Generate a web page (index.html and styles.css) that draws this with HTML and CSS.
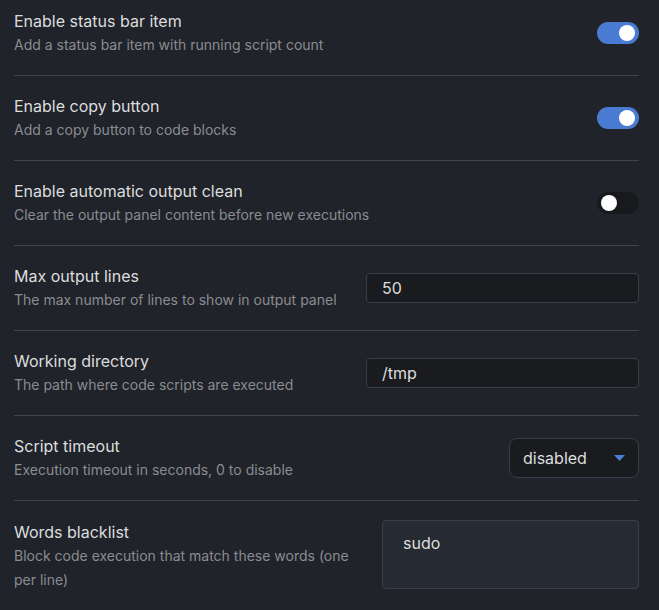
FILE: index.html
```html
<!DOCTYPE html>
<html>
<head>
<meta charset="utf-8">
<link rel="stylesheet" href="styles.css">
</head>
<body>
<div class="settings">
  <div class="setting-item">
    <div class="info">
      <div class="name">Enable status bar item</div>
      <div class="desc">Add a status bar item with running script count</div>
    </div>
    <div class="control"><div class="toggle on"><span class="knob"></span></div></div>
  </div>
  <div class="setting-item">
    <div class="info">
      <div class="name">Enable copy button</div>
      <div class="desc">Add a copy button to code blocks</div>
    </div>
    <div class="control"><div class="toggle on"><span class="knob"></span></div></div>
  </div>
  <div class="setting-item">
    <div class="info">
      <div class="name">Enable automatic output clean</div>
      <div class="desc">Clear the output panel content before new executions</div>
    </div>
    <div class="control"><div class="toggle"><span class="knob"></span></div></div>
  </div>
  <div class="setting-item">
    <div class="info">
      <div class="name">Max output lines</div>
      <div class="desc">The max number of lines to show in output panel</div>
    </div>
    <div class="control"><input class="text-input" type="text" value="50"></div>
  </div>
  <div class="setting-item">
    <div class="info">
      <div class="name">Working directory</div>
      <div class="desc">The path where code scripts are executed</div>
    </div>
    <div class="control"><input class="text-input" type="text" value="/tmp"></div>
  </div>
  <div class="setting-item">
    <div class="info">
      <div class="name">Script timeout</div>
      <div class="desc">Execution timeout in seconds, 0 to disable</div>
    </div>
    <div class="control">
      <div class="dropdown"><span>disabled</span><svg class="caret" width="11" height="6" viewBox="0 0 11 6"><path d="M0 0H11L5.5 6Z" fill="#4c7fd6"/></svg></div>
    </div>
  </div>
  <div class="setting-item top">
    <div class="info narrow">
      <div class="name">Words blacklist</div>
      <div class="desc">Block code execution that match these words (one per line)</div>
    </div>
    <div class="control"><textarea class="textarea">sudo</textarea></div>
  </div>
</div>
</body>
</html>
```

FILE: styles.css
```css
html, body {
  margin: 0;
  padding: 0;
  background: #202329;
  height: 100%;
  overflow: hidden;
}
body {
  font-family: Inter, "Noto Sans", sans-serif;
  color: #dcddde;
}
.settings {
  padding: 0 20px 0 14px;
}
.setting-item {
  display: flex;
  align-items: center;
  justify-content: space-between;
  padding: 18px 0;
  border-top: 1px solid #41434f;
}
.setting-item:first-child {
  border-top: none;
  padding-top: 9px;
}
.setting-item.top {
  align-items: flex-start;
  padding-top: 19px;
}
.info {
  flex: 1 1 auto;
  margin-right: 20px;
}
.info.narrow {
  flex: 0 0 345px;
}
.name {
  font-size: 16px;
  line-height: 24px;
  color: #dcddde;
}
.desc {
  font-size: 14px;
  line-height: 24px;
  color: #8a8c91;
}
.control {
  display: flex;
  justify-content: flex-end;
  flex: 0 0 auto;
}
.toggle {
  width: 42px;
  height: 22px;
  border-radius: 11px;
  background: #17191d;
  position: relative;
}
.toggle.on {
  background: #4a7bd3;
}
.knob {
  position: absolute;
  top: 3px;
  left: 4px;
  width: 16px;
  height: 16px;
  border-radius: 50%;
  background: #ffffff;
}
.toggle.on .knob {
  left: auto;
  right: 4px;
}
.text-input {
  box-sizing: border-box;
  width: 273px;
  height: 30px;
  padding: 0 15px;
  background: #191b1f;
  border: 1px solid #3b3e46;
  border-radius: 4px;
  color: #dcddde;
  font-family: Inter, "Noto Sans", sans-serif;
  font-size: 16px;
  outline: none;
}
.dropdown {
  box-sizing: border-box;
  width: 130px;
  height: 40px;
  padding: 0 13px 0 13px;
  display: flex;
  align-items: center;
  justify-content: space-between;
  background: #191b1f;
  border: 1px solid #3b3e46;
  border-radius: 8px;
  font-size: 16px;
  color: #dcddde;
}
.textarea {
  box-sizing: border-box;
  width: 257px;
  height: 69px;
  padding: 11px 20px;
  background: #262a32;
  border: 1px solid #3b3e46;
  border-radius: 4px;
  color: #dcddde;
  font-family: Inter, "Noto Sans", sans-serif;
  font-size: 16px;
  line-height: 22px;
  resize: none;
  outline: none;
}
```
